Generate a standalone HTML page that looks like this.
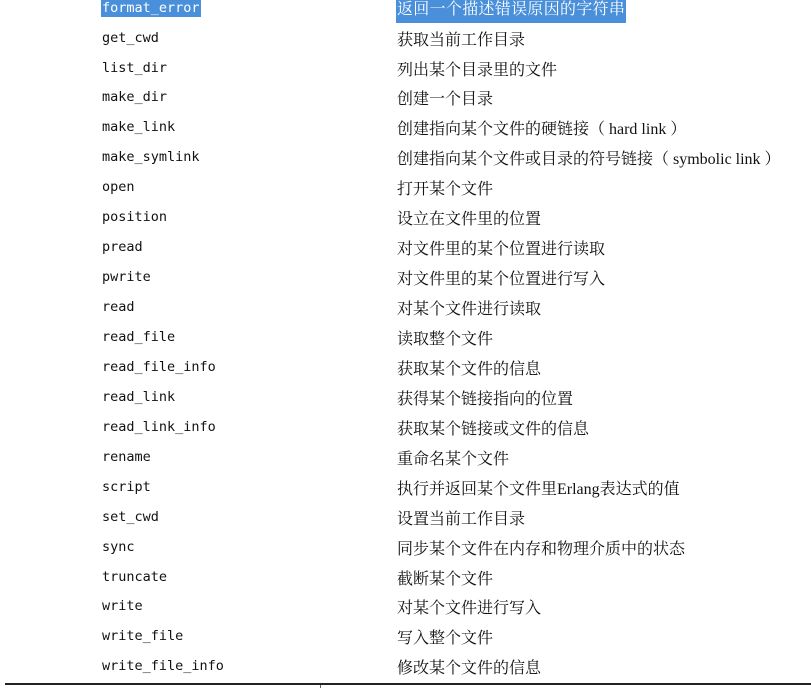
<!DOCTYPE html>
<html><head><meta charset="utf-8"><style>
body{margin:0;width:811px;height:688px;background:#fff;position:relative;overflow:hidden}
.r{position:absolute;left:0;width:811px;height:30px}
.a{position:absolute;left:102px;top:0;font:13.5px "DejaVu Sans Mono","Liberation Mono",monospace;color:#111;line-height:17px}
.b{position:absolute;left:397px;top:1px;font:16px "Liberation Serif","Noto Serif CJK SC",serif;color:#111;line-height:20px}
.h{background:#4a8fd9;color:#fff}
</style></head><body>
<div class="r" style="top:0"><span class="a h" style="left:101px;padding:0 1px">format_error</span><span class="b h" style="left:396px;top:0;padding:0 1px 3px;letter-spacing:0.3px">返回一个描述错误原因的字符串</span></div>
<div class="r" style="top:30px"><span class="a">get_cwd</span><span class="b">获取当前工作目录</span></div>
<div class="r" style="top:60px"><span class="a">list_dir</span><span class="b">列出某个目录里的文件</span></div>
<div class="r" style="top:89px"><span class="a">make_dir</span><span class="b">创建一个目录</span></div>
<div class="r" style="top:119px"><span class="a">make_link</span><span class="b">创建指向某个文件的硬链接（ hard link ）</span></div>
<div class="r" style="top:149px"><span class="a">make_symlink</span><span class="b">创建指向某个文件或目录的符号链接（ symbolic link ）</span></div>
<div class="r" style="top:179px"><span class="a">open</span><span class="b">打开某个文件</span></div>
<div class="r" style="top:209px"><span class="a">position</span><span class="b">设立在文件里的位置</span></div>
<div class="r" style="top:239px"><span class="a">pread</span><span class="b">对文件里的某个位置进行读取</span></div>
<div class="r" style="top:269px"><span class="a">pwrite</span><span class="b">对文件里的某个位置进行写入</span></div>
<div class="r" style="top:299px"><span class="a">read</span><span class="b">对某个文件进行读取</span></div>
<div class="r" style="top:329px"><span class="a">read_file</span><span class="b">读取整个文件</span></div>
<div class="r" style="top:359px"><span class="a">read_file_info</span><span class="b">获取某个文件的信息</span></div>
<div class="r" style="top:389px"><span class="a">read_link</span><span class="b">获得某个链接指向的位置</span></div>
<div class="r" style="top:419px"><span class="a">read_link_info</span><span class="b">获取某个链接或文件的信息</span></div>
<div class="r" style="top:449px"><span class="a">rename</span><span class="b">重命名某个文件</span></div>
<div class="r" style="top:479px"><span class="a">script</span><span class="b">执行并返回某个文件里Erlang表达式的值</span></div>
<div class="r" style="top:509px"><span class="a">set_cwd</span><span class="b">设置当前工作目录</span></div>
<div class="r" style="top:539px"><span class="a">sync</span><span class="b">同步某个文件在内存和物理介质中的状态</span></div>
<div class="r" style="top:569px"><span class="a">truncate</span><span class="b">截断某个文件</span></div>
<div class="r" style="top:598px"><span class="a">write</span><span class="b">对某个文件进行写入</span></div>
<div class="r" style="top:628px"><span class="a">write_file</span><span class="b">写入整个文件</span></div>
<div class="r" style="top:658px"><span class="a">write_file_info</span><span class="b">修改某个文件的信息</span></div>
<div style="position:absolute;left:5px;top:683px;width:806px;height:2px;background:#222"></div>
<div style="position:absolute;left:320px;top:685px;width:1px;height:3px;background:#666"></div>
</body></html>
